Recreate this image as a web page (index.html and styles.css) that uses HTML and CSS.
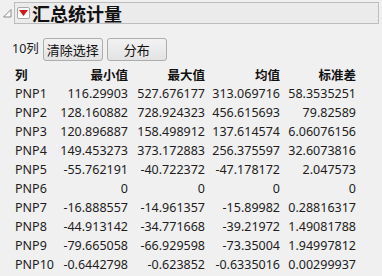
FILE: index.html
```html
<!DOCTYPE html>
<html lang="zh-CN">
<head>
  <meta charset="UTF-8">
  <title>汇总统计量</title>
  <link rel="stylesheet" href="styles.css">
</head>
<body>

  <div class="outline">
    <svg class="disclosure" width="9" height="9" viewBox="0 0 9 9">
      <path d="M8 0.5 L8 8 L0.5 8 Z" fill="#fafafa" stroke="#8a8a8a" stroke-width="1"/>
    </svg>
    <div class="outline-box">
      <span class="red-menu">
        <svg width="9" height="6" viewBox="0 0 9 6"><path d="M0 0 L9 0 L4.5 6 Z" fill="#d61a1a"/></svg>
      </span>
      <span class="outline-title">汇总统计量</span>
    </div>
  </div>

  <div class="toolbar">
    <span class="col-count">10列</span>
    <button class="tool-button">清除选择</button>
    <button class="tool-button">分布</button>
  </div>

  <div class="stats">
    <div class="head name">列</div>
    <div class="head">最小值</div>
    <div class="head">最大值</div>
    <div class="head">均值</div>
    <div class="head">标准差</div>

    <div class="name">PNP1</div><div>116.29903</div><div>527.676177</div><div>313.069716</div><div>58.3535251</div>
    <div class="name">PNP2</div><div>128.160882</div><div>728.924323</div><div>456.615693</div><div>79.82589</div>
    <div class="name">PNP3</div><div>120.896887</div><div>158.498912</div><div>137.614574</div><div>6.06076156</div>
    <div class="name">PNP4</div><div>149.453273</div><div>373.172883</div><div>256.375597</div><div>32.6073816</div>
    <div class="name">PNP5</div><div>-55.762191</div><div>-40.722372</div><div>-47.178172</div><div>2.047573</div>
    <div class="name">PNP6</div><div>0</div><div>0</div><div>0</div><div>0</div>
    <div class="name">PNP7</div><div>-16.888557</div><div>-14.961357</div><div>-15.89982</div><div>0.28816317</div>
    <div class="name">PNP8</div><div>-44.913142</div><div>-34.771668</div><div>-39.21972</div><div>1.49081788</div>
    <div class="name">PNP9</div><div>-79.665058</div><div>-66.929598</div><div>-73.35004</div><div>1.94997812</div>
    <div class="name">PNP10</div><div>-0.6442798</div><div>-0.623852</div><div>-0.6335016</div><div>0.00299937</div>
  </div>

</body>
</html>
```

FILE: styles.css
```css
body {
  margin: 0;
  background-color: #f0f0f0;
  color: #221c1c;
  font-family: "Noto Sans", "Noto Sans CJK SC", sans-serif;
  font-size: 12.5px;
  width: 382px;
  height: 276px;
  overflow: hidden;
}

.outline {
  display: flex;
  align-items: flex-start;
  padding: 2px 3px 0 2px;
}

.disclosure {
  margin: 7px 2px 0 1px;
}

.outline-box {
  flex: 1;
  display: flex;
  align-items: center;
  height: 20px;
  border: 1px solid #bdbdbd;
  background-color: #ebebeb;
  padding-left: 2px;
}

.red-menu {
  display: flex;
  align-items: center;
  justify-content: center;
  width: 11px;
  height: 10px;
  background-color: white;
  border: 1px solid #a9a9a9;
  border-radius: 2px;
  margin-right: 2px;
}

.outline-title {
  font-family: "Noto Sans CJK SC", sans-serif;
  font-weight: bold;
  font-size: 18px;
  color: #111;
  line-height: 20px;
}

.toolbar {
  display: flex;
  align-items: flex-start;
  gap: 4px;
  padding: 13px 0 0 12px;
}

.col-count {
  margin-top: 1px;
}

.tool-button {
  width: 60px;
  height: 23px;
  margin-top: 1px;
  padding: 0;
  border: 1px solid #adadad;
  border-radius: 3px;
  background: linear-gradient(#f2f2f2, #e3e3e3);
  font-family: "Noto Sans CJK SC", sans-serif;
  font-size: 13px;
  color: #111;
}

.stats {
  display: grid;
  grid-template-columns: 40px 73px 77px 75px 76px;
  grid-auto-rows: 19px;
  padding: 4px 0 0 15px;
  line-height: 19px;
}

.stats div {
  text-align: right;
  white-space: nowrap;
}

.stats .name {
  text-align: left;
}

.stats .head {
  font-family: "Noto Sans CJK SC", sans-serif;
  font-weight: bold;
  color: #111;
}
```
